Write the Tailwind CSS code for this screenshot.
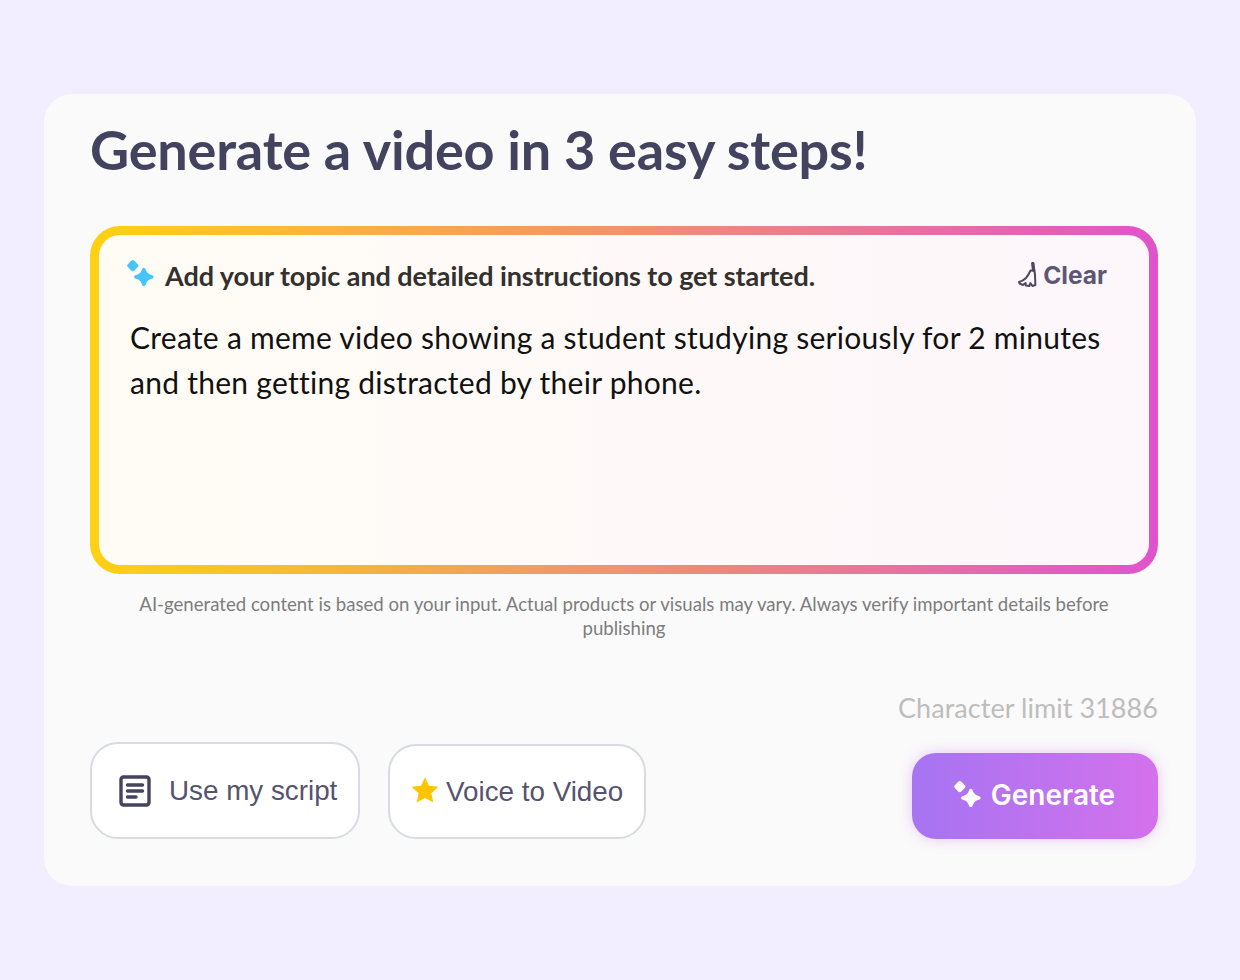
<!DOCTYPE html>
<html lang="en">
<head>
  <meta charset="UTF-8">
  <title>Generate a video</title>
  <script src="https://cdn.jsdelivr.net/npm/@tailwindcss/browser@4"></script>
</head>
<body class="bg-[#f2eeff] w-[1240px] h-[980px] overflow-hidden font-['Lato',sans-serif]">
  <div class="pt-[94px] px-[44px]">
    <div class="h-[792px] rounded-[28px] bg-[#fafafa] px-[46px] pr-[38px] flex flex-col">
      <h1 class="h-[132px] pt-[21px] text-[54px] leading-[70px] font-bold text-[#44435f] tracking-[-0.2px]">Generate a video in 3 easy steps!</h1>

      <!-- gradient border box -->
      <div class="h-[348px] rounded-[30px] p-[9px] bg-[linear-gradient(to_right,#ffd112,#e053cb)]">
        <div class="h-full rounded-[21px] bg-[linear-gradient(to_right,#fffcf5,#fdf6fb)] pl-[27px] pr-[42px] pt-[22px]">
          <div class="flex items-center justify-between h-[38px]">
            <div class="flex items-center gap-[11px]">
              <svg class="w-[28px] h-[28px] -mt-[4px]" viewBox="0 0 28 28" fill="#45c6fb">
                <path d="M6.8 0 Q7.6 0 8.4 .8 L12 4.4 Q13 5.6 12 6.8 L8.4 10.6 Q6.8 12 5.2 10.6 L1.6 6.8 Q.6 5.6 1.6 4.4 L5.2 .8 Q6 0 6.8 0Z"/>
                <path transform="translate(2.2 2.2) scale(.92)" d="M17 6 C18 6 18.6 6.8 19 7.8 C20 11 22 13 25.5 14 C26.8 14.4 27.6 15 27.6 16 C27.6 17 26.8 17.6 25.5 18 C22 19 20 21 19 24.2 C18.6 25.4 18 26 17 26 C16 26 15.4 25.4 15 24.2 C14 21 12 19 8.5 18 C7.2 17.6 6.4 17 6.4 16 C6.4 15 7.2 14.4 8.5 14 C12 13 14 11 15 7.8 C15.4 6.8 16 6 17 6Z"/>
              </svg>
              <span class="text-[27px] leading-[38px] font-bold text-[#33302e] tracking-[-0.07px] whitespace-nowrap">Add your topic and detailed instructions to get started.</span>
            </div>
            <div class="flex items-center gap-[4px] -mt-[2px]">
              <svg class="w-[22px] h-[26px]" viewBox="0 0 22 26" fill="none" stroke="#4b4862" stroke-width="2" stroke-linejoin="round" stroke-linecap="round">
                <path d="M15.8 1.5 L16.6 8" stroke-width="3.4"/>
                <path d="M13.5 8.5 L17.4 8.5 L18 13 L18.4 23 L15.4 24 L13.4 21 L12.4 24 L8.8 23.5 L8.6 21 L6 23 L2.5 21.5 L2 20 Q6 19 9 16 Q11.6 13 13.5 8.5 Z" />
              </svg>
              <span class="text-[24.5px] leading-[38px] font-bold text-[#5c5874] font-['Inter',sans-serif]">Clear</span>
            </div>
          </div>
          <p class="mt-[20px] pl-[4px] text-[30px] leading-[45px] text-[#111] tracking-[0.27px] whitespace-nowrap">Create a meme video showing a student studying seriously for 2 minutes<br>and then getting distracted by their phone.</p>
        </div>
      </div>

      <p class="mt-[18px] mx-auto max-w-[1000px] text-center text-[18.6px] leading-[24px] text-[#7d7d7d]">AI-generated content is based on your input. Actual products or visuals may vary. Always verify important details before publishing</p>

      <p class="mt-[50px] text-right text-[27px] leading-[36px] text-[#bdbdbd] tracking-[0.05px]">Character limit 31886</p>

      <div class="mt-[16px] flex items-end justify-between">
        <div class="flex items-end gap-[28px] font-['Liberation_Sans',sans-serif]">
          <button class="w-[270px] h-[97px] rounded-[28px] bg-white border-2 border-[#d8dbe2] flex items-center pl-[26px] gap-[17px]">
            <svg class="w-[34px] h-[34px]" viewBox="0 0 34 34" fill="none" stroke="#45435f" stroke-width="3.4" stroke-linecap="round">
              <rect x="3" y="3" width="28" height="28" rx="2.5"/>
              <path d="M9.5 11H24.5M9.5 17H24.5M9.5 23H18"/>
            </svg>
            <span class="text-[27.8px] text-[#55536f] whitespace-nowrap">Use my script</span>
          </button>
          <button class="w-[258px] h-[95px] rounded-[28px] bg-white border-2 border-[#d8dbe2] flex items-center pl-[21px] gap-[7px]">
            <svg class="w-[28px] h-[28px] -mt-[3px]" viewBox="0 0 24 24" fill="#ffc400">
              <path d="M12 1 L15.4 8.4 L23.5 9.3 L17.5 14.8 L19.1 22.8 L12 18.8 L4.9 22.8 L6.5 14.8 L0.5 9.3 L8.6 8.4 Z"/>
            </svg>
            <span class="text-[27.8px] text-[#55536f] whitespace-nowrap">Voice to Video</span>
          </button>
        </div>
        <button class="w-[246px] h-[86px] pr-[2px] rounded-[24px] bg-[linear-gradient(to_right,#a674f2,#d471ec)] shadow-[0_0_14px_rgba(200,110,235,0.35)] flex items-center justify-center gap-[10px] font-['Inter',sans-serif]">
          <svg class="w-[28px] h-[28px] -mt-[2px]" viewBox="0 0 28 28" fill="#fff">
            <path d="M6.8 0 Q7.6 0 8.4 .8 L12 4.4 Q13 5.6 12 6.8 L8.4 10.6 Q6.8 12 5.2 10.6 L1.6 6.8 Q.6 5.6 1.6 4.4 L5.2 .8 Q6 0 6.8 0Z"/>
            <path transform="translate(2.2 2.2) scale(.92)" d="M17 6 C18 6 18.6 6.8 19 7.8 C20 11 22 13 25.5 14 C26.8 14.4 27.6 15 27.6 16 C27.6 17 26.8 17.6 25.5 18 C22 19 20 21 19 24.2 C18.6 25.4 18 26 17 26 C16 26 15.4 25.4 15 24.2 C14 21 12 19 8.5 18 C7.2 17.6 6.4 17 6.4 16 C6.4 15 7.2 14.4 8.5 14 C12 13 14 11 15 7.8 C15.4 6.8 16 6 17 6Z"/>
          </svg>
          <span class="text-[28px] font-semibold text-white -mt-[2px]">Generate</span>
        </button>
      </div>
    </div>
  </div>
</body>
</html>
